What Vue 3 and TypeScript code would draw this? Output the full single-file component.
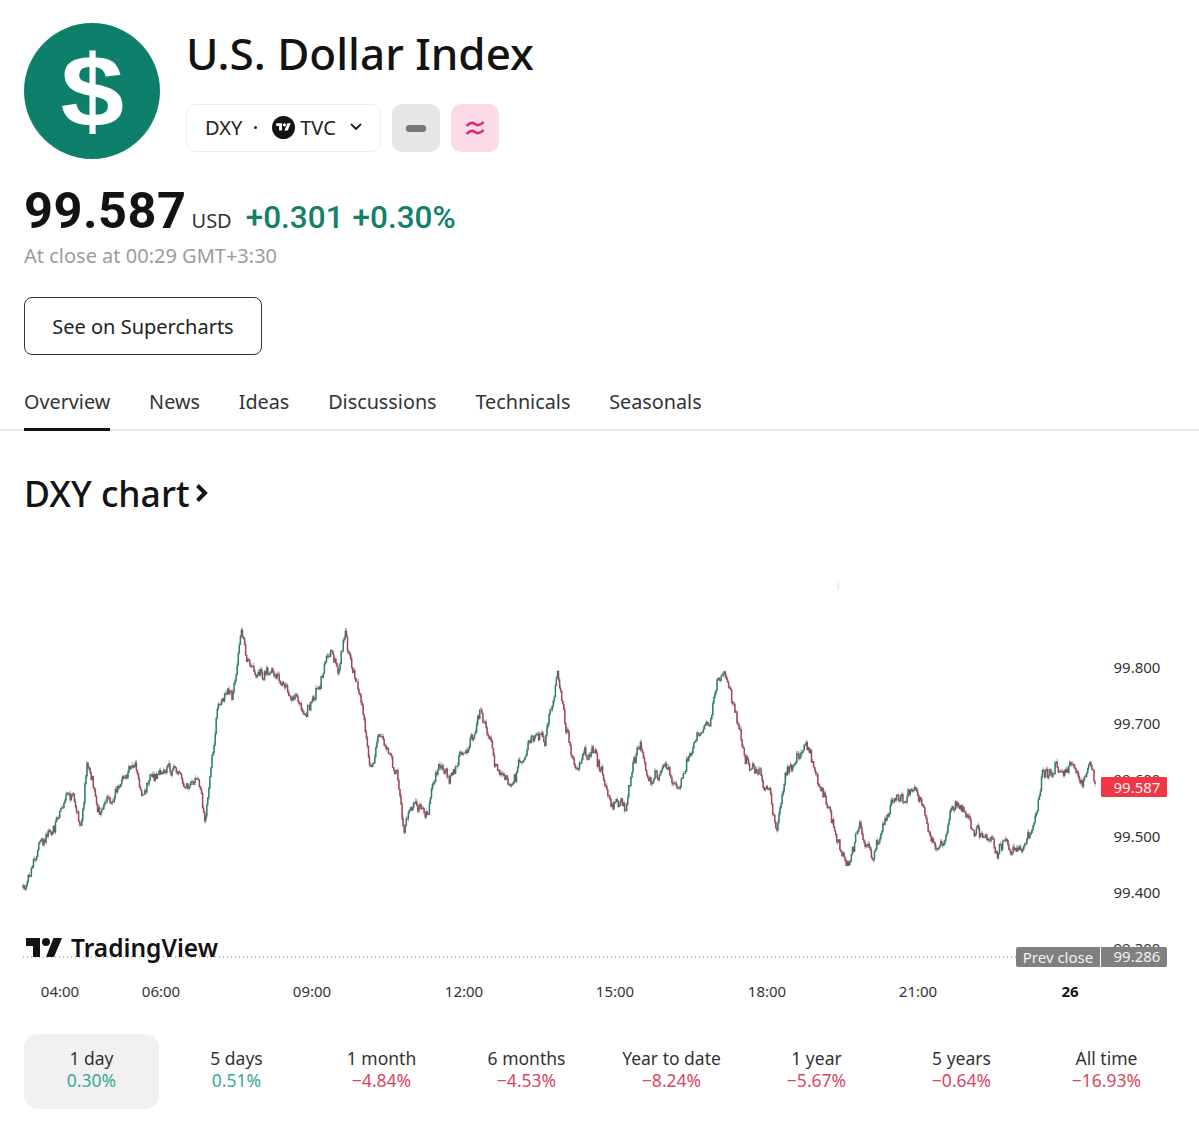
<script setup lang="ts">
const tabs = ['Overview', 'News', 'Ideas', 'Discussions', 'Technicals', 'Seasonals']

const ranges = [
  { label: '1 day', value: '0.30%', up: true },
  { label: '5 days', value: '0.51%', up: true },
  { label: '1 month', value: '−4.84%', up: false },
  { label: '6 months', value: '−4.53%', up: false },
  { label: 'Year to date', value: '−8.24%', up: false },
  { label: '1 year', value: '−5.67%', up: false },
  { label: '5 years', value: '−0.64%', up: false },
  { label: 'All time', value: '−16.93%', up: false },
]

const priceLabels = [
  { text: '99.800', y: 674 },
  { text: '99.700', y: 730 },
  { text: '99.600', y: 786 },
  { text: '99.500', y: 843 },
  { text: '99.400', y: 899 },
  { text: '99.300', y: 955 },
]

const timeLabels = [
  { text: '04:00', x: 60 },
  { text: '06:00', x: 161 },
  { text: '09:00', x: 312 },
  { text: '12:00', x: 464 },
  { text: '15:00', x: 615 },
  { text: '18:00', x: 767 },
  { text: '21:00', x: 918 },
]

// rough outline of the day's price, in page pixels
const outline: [number, number][] = [
  [23, 888], [30, 880], [36, 862], [39, 840], [45, 835], [55, 833], [60, 815], [68, 790],
  [75, 800], [81, 825], [87, 765], [92, 775], [97, 805], [110, 800], [125, 770], [135, 765],
  [142, 795], [155, 775], [168, 768], [185, 785], [200, 795], [205, 822], [210, 770], [215, 735],
  [217, 700], [232, 690], [238, 650], [241, 622], [248, 655], [262, 680], [270, 670], [285, 690],
  [305, 715], [320, 690], [330, 650], [338, 665], [345, 630], [352, 665], [362, 700], [370, 775],
  [380, 730], [387, 745], [397, 780], [404, 828], [412, 800], [425, 815], [440, 770], [450, 775],
  [465, 745], [480, 712], [490, 740], [497, 770], [510, 785], [530, 745], [545, 735], [558, 672],
  [565, 730], [575, 770], [595, 755], [610, 800], [625, 805], [640, 745], [650, 775], [665, 770],
  [680, 790], [690, 750], [710, 730], [718, 680], [723, 672], [735, 710], [745, 760], [755, 770],
  [770, 790], [777, 830], [785, 770], [805, 742], [815, 770], [825, 800], [835, 835], [850, 862],
  [860, 828], [872, 850], [890, 810], [900, 798], [915, 785], [925, 810], [938, 858], [950, 820],
  [958, 808], [975, 830], [990, 838], [997, 855], [1005, 843], [1025, 853], [1037, 825], [1043, 785],
  [1055, 770], [1075, 766], [1082, 785], [1090, 772], [1096, 788],
]

let seed = 20240725
const rand = () => {
  seed = (seed * 1664525 + 1013904223) % 4294967296
  return seed / 4294967296
}

const lineAt = (x: number) => {
  for (let i = 1; i < outline.length; i++) {
    const [x0, y0] = outline[i - 1]
    const [x1, y1] = outline[i]
    if (x <= x1) return y0 + ((y1 - y0) * (x - x0)) / (x1 - x0)
  }
  return outline[outline.length - 1][1]
}

let upBodies = ''
let downBodies = ''
let wicks = ''
let prev = lineAt(23)
let slow = 0
let fast = 0
for (let x = 23; x <= 1096; x += 1.05) {
  slow = slow * 0.9 + (rand() - 0.5) * 6
  fast = fast * 0.3 + (rand() - 0.5) * 9
  const close = lineAt(x) + slow + fast
  const top = Math.min(prev, close)
  const bottom = Math.max(prev, close)
  const px = x.toFixed(1)
  const body = `M${px} ${top.toFixed(1)}V${(bottom + 0.6).toFixed(1)}`
  if (close <= prev) upBodies += body
  else downBodies += body
  wicks += `M${px} ${(top - rand() * 3).toFixed(1)}V${(bottom + rand() * 3).toFixed(1)}`
  prev = close
}
</script>

<template>
  <div class="page">
    <header class="head">
      <div class="logo"><span>$</span></div>
      <div class="head-main">
        <h1>U.S. Dollar Index</h1>
        <div class="chips">
          <button class="symbol">
            <span>DXY</span>
            <span class="dot"></span>
            <svg class="tv-badge" width="23" height="23" viewBox="0 0 23 23">
              <circle cx="11.5" cy="11.5" r="11.5" fill="#131313" />
              <g transform="translate(4.2 7.2) scale(0.41)" fill="#fff">
                <path d="M14 22H7V11H0V4h14v18zM28 22h-8l7.5-18h8L28 22z" transform="translate(0 -4)" />
                <circle cx="20" cy="4" r="4" />
              </g>
            </svg>
            <span class="exchange">TVC</span>
            <svg class="caret" width="12" height="8" viewBox="0 0 12 8">
              <path d="M1.5 1.5 6 6l4.5-4.5" fill="none" stroke="#222" stroke-width="1.8" stroke-linecap="round" stroke-linejoin="round" />
            </svg>
          </button>
          <div class="badge badge-grey"><span class="bar"></span></div>
          <div class="badge badge-pink">
            <svg width="20" height="18" viewBox="0 0 20 18">
              <path d="M1.5 7C5 3 8 3.5 10 5s5 2 8.500-2M1.500 15C5 11 8 11.500 10 13s5 2 8.500-2" fill="none" stroke="#d62a6e" stroke-width="2.600" />
            </svg>
          </div>
        </div>
      </div>
    </header>

    <div class="quote">
      <span class="price">99.587</span>
      <span class="currency">USD</span>
      <span class="change">+0.301</span>
      <span class="change">+0.30%</span>
    </div>
    <p class="closed">At close at 00:29 GMT+3:30</p>

    <button class="cta">See on Supercharts</button>

    <nav class="tabs">
      <a v-for="(tab, i) in tabs" :key="tab" :class="{ active: i === 0 }">{{ tab }}</a>
    </nav>

    <h2 class="section">
      DXY chart
      <svg width="13" height="20" viewBox="0 0 13 20">
        <path d="M2.500 2.500 10 10l-7.500 7.500" fill="none" stroke="#131313" stroke-width="4" />
      </svg>
    </h2>

    <svg class="chart" width="1199" height="480" viewBox="0 540 1199 480">
      <line x1="838" y1="583" x2="838.500" y2="591" stroke="#e4e4e4" />
      <path :d="upBodies" stroke="#1f9480" stroke-width="1.500" fill="none" />
      <path :d="downBodies" stroke="#cf4057" stroke-width="1.500" fill="none" />
      <path :d="wicks" stroke="#4f5a57" stroke-width="0.900" stroke-opacity="0.55" fill="none" />

      <text v-for="p in priceLabels" :key="p.text" class="axis" x="1137" :y="p.y" text-anchor="middle">{{ p.text }}</text>

      <line x1="23" y1="958" x2="1016" y2="958" stroke="#8a8a8a" stroke-dasharray="1 3" />
      <rect x="60" y="930" width="160" height="27" fill="#fff" />

      <rect x="1101" y="778" width="66" height="20" rx="1" fill="#f23645" />
      <text class="tag" x="1137" y="794" text-anchor="middle">99.587</text>

      <rect x="1016" y="948" width="151" height="20" rx="2" fill="#808080" />
      <line x1="1100.500" y1="948" x2="1100.500" y2="968" stroke="#fff" />
      <text class="tag" x="1058" y="964" text-anchor="middle">Prev close</text>
      <text class="tag" x="1137" y="963" text-anchor="middle">99.286</text>

      <g transform="translate(26 939)" fill="#131313">
        <path d="M14 19H7V8H0V0h14v19zM28 19h-8l7.500-19H36L28 19z" />
        <circle cx="20" cy="4" r="4" />
      </g>
      <text class="wordmark" x="71" y="958">TradingView</text>

      <text v-for="t in timeLabels" :key="t.text" class="axis" :x="t.x" y="998" text-anchor="middle">{{ t.text }}</text>
      <text class="axis axis-bold" x="1070" y="998" text-anchor="middle">26</text>
    </svg>

    <div class="ranges">
      <div v-for="(r, i) in ranges" :key="r.label" class="range" :class="{ selected: i === 0 }">
        <span class="range-label">{{ r.label }}</span>
        <span class="range-value" :class="r.up ? 'up' : 'down'">{{ r.value }}</span>
      </div>
    </div>
  </div>
</template>

<style>
html, body {
  background: #fff;
}
</style>

<style scoped>
.page {
  width: 1199px;
  height: 1145px;
  overflow: hidden;
  padding-top: 23px;
  box-sizing: border-box;
  font-family: "Noto Sans", "Open Sans", sans-serif;
  color: #131313;
}

.head {
  display: flex;
  gap: 26px;
  padding-left: 24px;
}

.logo {
  width: 136px;
  height: 136px;
  border-radius: 50%;
  background: #0d7f6a;
  color: #fff;
  display: flex;
  align-items: center;
  justify-content: center;
  font-family: "Liberation Sans", sans-serif;
  font-weight: 700;
  font-size: 102px;
  line-height: 1;
}

.logo span {
  transform: scaleX(1.12);
}

h1 {
  margin: 0;
  font-size: 44px;
  font-weight: 500;
  line-height: 60px;
}

.chips {
  display: flex;
  gap: 11px;
  margin-top: 21px;
}

.symbol {
  display: flex;
  align-items: center;
  width: 195px;
  height: 48px;
  padding: 0 0 2px 18px;
  box-sizing: border-box;
  border: 1px solid #ececec;
  border-radius: 10px;
  background: #fff;
  font: inherit;
  font-size: 20px;
  color: #222;
}

.dot {
  width: 3px;
  height: 3px;
  border-radius: 50%;
  background: #222;
  margin: 0 15px 0 12px;
}

.exchange {
  margin-left: 5px;
}

.caret {
  margin-left: 14px;
}

.badge {
  width: 48px;
  height: 48px;
  border-radius: 10px;
  display: flex;
  align-items: center;
  justify-content: center;
}

.badge-grey {
  background: #e6e6e6;
}

.bar {
  width: 20px;
  height: 7px;
  border-radius: 3px;
  background: #777;
}

.badge-pink {
  background: #fcdbe8;
}

.quote {
  display: flex;
  align-items: baseline;
  padding-left: 24px;
  margin-top: 31px;
  font-family: Roboto, "Noto Sans", sans-serif;
  line-height: 42px;
}

.price {
  font-size: 50.5px;
  font-weight: 700;
  letter-spacing: 0.5px;
}

.currency {
  font-family: "Noto Sans", sans-serif;
  font-size: 20px;
  margin: 0 14px 0 5px;
  color: #333;
}

.change {
  font-size: 31.5px;
  font-weight: 500;
  color: #14806c;
  margin-right: 9px;
}

.closed {
  margin: 0;
  padding-left: 24px;
  font-size: 20px;
  line-height: 28px;
  color: #9c9c9c;
}

.cta {
  display: block;
  margin: 27px 0 0 24px;
  width: 238px;
  height: 58px;
  border: 1px solid #333;
  border-radius: 8px;
  background: #fff;
  font: inherit;
  font-size: 20px;
  color: #222;
}

.tabs {
  display: flex;
  gap: 38.800px;
  padding-left: 24px;
  margin-top: 22px;
  height: 54px;
  box-sizing: border-box;
  border-bottom: 2px solid #e9e9e9;
  font-size: 19.800px;
  line-height: 50px;
  color: #333;
}

.tabs a {
  display: block;
  height: 54px;
  box-sizing: border-box;
}

.tabs a.active {
  border-bottom: 3px solid #131313;
}

.section {
  display: flex;
  align-items: center;
  gap: 5px;
  margin: 38px 0 0 24px;
  font-size: 35.5px;
  font-weight: 500;
  line-height: 48px;
  height: 48px;
}

.chart {
  display: block;
  margin-top: 22px;
}

.axis {
  font-family: "Noto Sans", sans-serif;
  font-size: 15px;
  fill: #333;
}

.axis-bold {
  font-weight: 700;
  fill: #131313;
}

.tag {
  font-family: "Noto Sans", sans-serif;
  font-size: 15px;
  fill: #f2f2f2;
}

.wordmark {
  font-family: "Noto Sans", sans-serif;
  font-size: 24.500px;
  font-weight: 600;
  fill: #131313;
}

.ranges {
  display: grid;
  grid-template-columns: repeat(8, 135px);
  gap: 10px;
  margin: 15px 0 0 24px;
}

.range {
  height: 75px;
  padding-bottom: 6px;
  box-sizing: border-box;
  border-radius: 14px;
  display: flex;
  flex-direction: column;
  align-items: center;
  justify-content: center;
  font-size: 17.5px;
  line-height: 22px;
}

.range.selected {
  background: #f1f1f1;
}

.range-label {
  color: #333;
}

.up {
  color: #3aa896;
}

.down {
  color: #d9475f;
}
</style>
